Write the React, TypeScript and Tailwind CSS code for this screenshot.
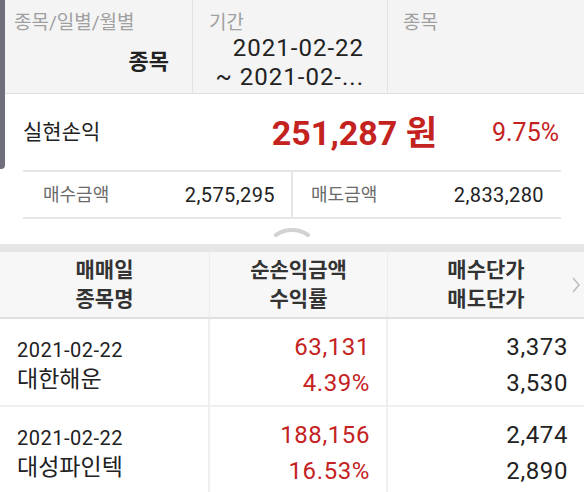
import React from "react";

const font = { fontFamily: 'Roboto, "Noto Sans CJK KR", sans-serif' };

const rows = [
  { date: "2021-02-22", name: "대한해운", profit: "63,131", rate: "4.39%", buy: "3,373", sell: "3,530" },
  { date: "2021-02-22", name: "대성파인텍", profit: "188,156", rate: "16.53%", buy: "2,474", sell: "2,890" },
];

export default function App() {
  return (
    <div className="relative w-[584px] h-[492px] overflow-hidden bg-white" style={font}>
      {/* scroll handle on the left edge */}
      <div className="absolute left-0 top-0 w-[5px] h-[169px] bg-[#6f6e7b] rounded-br-[4px]" />

      {/* filter header */}
      <div className="flex h-[94px] bg-[#f4f4f4] border-b border-[#dedede]">
        <div className="w-[193px] border-r border-[#e2e2e2] flex flex-col pl-[14px] pr-[23px] pt-[9px]">
          <span className="text-[19px] leading-[28px] text-[#a0a0a0]">종목/일별/월별</span>
          <span className="self-end mt-[10px] text-[22px] leading-[30px] font-bold text-[#222]">종목</span>
        </div>
        <div className="w-[195px] border-r border-[#e2e2e2] flex flex-col pl-[16px] pt-[9px]">
          <span className="text-[19px] leading-[28px] text-[#a0a0a0]">기간</span>
          <div className="flex flex-col items-end pr-[23px] -mt-[3px] text-[24px] leading-[29px] tracking-[1px] text-[#222]">
            <span>2021-02-22</span>
            <span>~ 2021-02-...</span>
          </div>
        </div>
        <div className="flex-1 pl-[15px] pt-[9px]">
          <span className="text-[19px] leading-[28px] text-[#a0a0a0]">종목</span>
        </div>
      </div>

      {/* realized profit */}
      <div className="flex items-center h-[76px] pl-[23px] pr-[25px] pt-[2px]">
        <span className="flex-1 text-[21px] text-[#222]">실현손익</span>
        <span className="text-[34px] font-bold text-[#c4221f]">251,287 원</span>
        <span className="w-[122px] text-right text-[25px] text-[#c4221f]">9.75%</span>
      </div>

      <div className="mx-[23px] flex h-[49px] border-y-2 border-[#e6e6e6]">
        <div className="w-[270px] flex items-center justify-between pl-[20px] pr-[16px] border-r-2 border-[#e6e6e6]">
          <span className="text-[18px] text-[#6a6a6a]">매수금액</span>
          <span className="text-[20px] tracking-[0.4px] text-[#222]">2,575,295</span>
        </div>
        <div className="flex-1 flex items-center justify-between pl-[18px] pr-[17px]">
          <span className="text-[18px] text-[#6a6a6a]">매도금액</span>
          <span className="text-[20px] tracking-[0.4px] text-[#222]">2,833,280</span>
        </div>
      </div>

      <div className="flex justify-center h-[25px] pt-[8px]">
        <svg width="38" height="10" viewBox="0 0 38 10">
          <path d="M3 8 Q10 3 19 3 Q28 3 35 8" fill="none" stroke="#d2d2d2" strokeWidth="4" strokeLinecap="round" strokeLinejoin="round" />
        </svg>
      </div>

      <div className="h-[8px] bg-[#e6e6e6]" />

      {/* table header */}
      <div className="flex h-[67px] bg-[#f7f7f7] border-b-2 border-[#e0e0e0] text-[21px] leading-[29px] font-bold text-[#333]">
        <div className="w-[210px] flex flex-col items-center justify-center border-r border-[#ececec]">
          <span>매매일</span>
          <span>종목명</span>
        </div>
        <div className="w-[178px] flex flex-col items-center justify-center border-r border-[#ececec]">
          <span>순손익금액</span>
          <span>수익률</span>
        </div>
        <div className="relative flex-1 flex flex-col items-center justify-center">
          <span>매수단가</span>
          <span>매도단가</span>
          <svg className="absolute right-[3px] top-[24px]" width="10" height="18" viewBox="0 0 10 18">
            <path d="M2 2 L8 9 L2 16" fill="none" stroke="#bdbdbd" strokeWidth="1.5" />
          </svg>
        </div>
      </div>

      {rows.map((r, i) => (
        <div key={i} className="flex h-[88px] border-b-2 border-[#efefef]">
          <div className="w-[210px] flex flex-col justify-center pl-[17px] pt-[6px] border-r-2 border-[#efefef]">
            <span className="text-[20px] leading-[30px] tracking-[0.5px] text-[#222]">{r.date}</span>
            <span className="text-[23px] leading-[30px] text-[#222]">{r.name}</span>
          </div>
          <div className="w-[178px] flex flex-col items-end justify-center pr-[16px] pt-[6px] border-r-2 border-[#efefef] text-[24px] leading-[36px] tracking-[0.6px] text-[#c4221f]">
            <span>{r.profit}</span>
            <span>{r.rate}</span>
          </div>
          <div className="flex-1 flex flex-col items-end justify-center pr-[16px] pt-[6px] text-[24px] leading-[36px] tracking-[0.6px] text-[#222]">
            <span>{r.buy}</span>
            <span>{r.sell}</span>
          </div>
        </div>
      ))}
    </div>
  );
}
